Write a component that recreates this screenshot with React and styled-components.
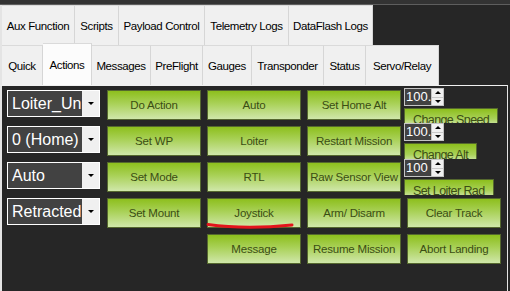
import styled, { createGlobalStyle } from 'styled-components';

const Global = createGlobalStyle`
  html, body { margin: 0; padding: 0; background: #262626; }
  body { font-family: 'Liberation Sans', Arial, sans-serif; overflow: hidden; }
`;

const Window = styled.div`
  position: relative;
  width: 510px;
  height: 291px;
  background: #262626;
  display: flex;
  flex-direction: column;
  overflow: hidden;
`;

const TopEdge = styled.div`
  height: 5px;
  box-sizing: border-box;
  background: #333333;
  border-bottom: 1px solid #5e5e5e;
`;

const TabRow = styled.div`
  display: flex;
  align-items: flex-end;
  height: 40px;
  border-left: 2px solid #e4e4e4;
`;

const Tab = styled.div`
  width: ${p => p.$w}px;
  height: ${p => (p.$active ? 42 : 40)}px;
  box-sizing: border-box;
  background: ${p => (p.$active ? '#fcfcfc' : '#f0f0f0')};
  border-top: 1px solid #dadada;
  border-right: 1px solid #d6d6d6;
  display: flex;
  align-items: center;
  justify-content: center;
  font-size: 11.5px;
  letter-spacing: -0.4px;
  color: #000;
  white-space: nowrap;
`;

const Panel = styled.div`
  flex: 1;
  width: 508px;
  box-sizing: border-box;
  border-top: 1px solid #f0f0f0;
  border-left: 2px solid #e4e4e4;
  border-right: 1px solid #e4e4e4;
  padding: 4px 0 0 5px;
`;

const Grid = styled.div`
  display: grid;
  grid-template-columns: repeat(5, 94px);
  grid-template-rows: repeat(5, 30px);
  gap: 6px;
`;

const Combo = styled.div`
  grid-column: 1;
  width: 93px;
  height: 27px;
  box-sizing: border-box;
  border: 1px solid #ffffff;
  background: #424242;
  display: flex;
`;

const ComboText = styled.div`
  flex: 1;
  overflow: hidden;
  white-space: nowrap;
  color: #ffffff;
  font-size: 16px;
  line-height: 25px;
  padding-left: 4px;
`;

const DropButton = styled.div`
  width: 17px;
  background: #f0f0f0;
  display: flex;
  align-items: center;
  justify-content: center;
  &::after {
    content: '';
    border-left: 3px solid transparent;
    border-right: 3px solid transparent;
    border-top: 3px solid #000;
  }
`;

const GreenButton = styled.div`
  grid-column: ${p => p.$col};
  grid-row: ${p => p.$row};
  box-sizing: border-box;
  height: 30px;
  border: 1px solid #55682e;
  background: linear-gradient(to bottom, #8dbf1d 0%, #a9d158 45%, #d0e7aa 100%);
  color: #3b4d14;
  font-size: 11.5px;
  letter-spacing: -0.2px;
  display: flex;
  align-items: center;
  justify-content: center;
  white-space: nowrap;
`;

const Stack = styled.div`
  grid-column: 5;
  grid-row: 1 / span 3;
  margin: -2px 0 0 -3px;
  display: flex;
  flex-direction: column;
  align-items: flex-start;
`;

const Numeric = styled.div`
  width: 40px;
  height: 18px;
  box-sizing: border-box;
  border: 1px solid #c4c4c4;
  background: #424242;
  display: flex;
`;

const NumText = styled.div`
  flex: 1;
  color: #ffffff;
  font-size: 13px;
  line-height: 16px;
  padding-left: 1px;
  overflow: hidden;
`;

const Spinner = styled.div`
  width: 11px;
  background: #f0f0f0;
  border-left: 1px solid #c4c4c4;
  display: flex;
  flex-direction: column;
`;

const SpinHalf = styled.div`
  flex: 1;
  display: flex;
  align-items: center;
  justify-content: center;
  border-top: ${p => (p.$down ? '1px solid #c8c8c8' : 'none')};
  &::after {
    content: '';
    border-left: 3px solid transparent;
    border-right: 3px solid transparent;
    ${p => (p.$down ? 'border-top: 3px solid #000;' : 'border-bottom: 3px solid #000;')}
  }
`;

const ClipButton = styled.div`
  margin-top: 2px;
  height: ${p => p.$h}px;
  box-sizing: border-box;
  overflow: hidden;
  padding: 1px 8px 0;
  border: 1px solid #55682e;
  border-bottom: none;
  background: linear-gradient(to bottom, #8dbf1d 0%, #a9d158 70%, #c3df90 100%);
  color: #3b4d14;
  font-size: 12.5px;
  letter-spacing: -0.6px;
  line-height: 20px;
  white-space: nowrap;
`;

const Annotation = styled.svg`
  position: absolute;
  left: 0;
  top: 0;
  pointer-events: none;
`;

const row1 = [
  ['Aux Function', 73],
  ['Scripts', 44],
  ['Payload Control', 86],
  ['Telemetry Logs', 84],
  ['DataFlash Logs', 84],
];

const row2 = [
  ['Quick', 41],
  ['Actions', 49, true],
  ['Messages', 59],
  ['PreFlight', 52],
  ['Gauges', 49],
  ['Transponder', 72],
  ['Status', 42],
  ['Servo/Relay', 73],
];

const combos = ['Loiter_Unlim', '0 (Home)', 'Auto', 'Retracted'];

const buttons = [
  ['Do Action', 2, 1], ['Auto', 3, 1], ['Set Home Alt', 4, 1],
  ['Set WP', 2, 2], ['Loiter', 3, 2], ['Restart Mission', 4, 2],
  ['Set Mode', 2, 3], ['RTL', 3, 3], ['Raw Sensor View', 4, 3],
  ['Set Mount', 2, 4], ['Joystick', 3, 4], ['Arm/ Disarm', 4, 4], ['Clear Track', 5, 4],
  ['Message', 3, 5], ['Resume Mission', 4, 5], ['Abort Landing', 5, 5],
];

const spinners = [
  ['100.', 'Change Speed', 15],
  ['100.', 'Change Alt', 16],
  ['100', 'Set Loiter Rad', 16],
];

export default function App() {
  return (
    <Window>
      <Global />
      <TopEdge />
      <TabRow>
        {row1.map(([t, w]) => <Tab key={t} $w={w}>{t}</Tab>)}
      </TabRow>
      <TabRow>
        {row2.map(([t, w, a]) => <Tab key={t} $w={w} $active={a}>{t}</Tab>)}
      </TabRow>
      <Panel>
        <Grid>
          {combos.map((c, i) => (
            <Combo key={c} style={{ gridRow: i + 1 }}>
              <ComboText>{c}</ComboText>
              <DropButton />
            </Combo>
          ))}
          {buttons.map(([t, col, row]) => (
            <GreenButton key={t} $col={col} $row={row}>{t}</GreenButton>
          ))}
          <Stack>
            {spinners.map(([v, label, h]) => (
              <div key={label}>
                <Numeric>
                  <NumText>{v}</NumText>
                  <Spinner>
                    <SpinHalf />
                    <SpinHalf $down />
                  </Spinner>
                </Numeric>
                <ClipButton $h={h}>{label}</ClipButton>
              </div>
            ))}
          </Stack>
        </Grid>
      </Panel>
      <Annotation width="510" height="291">
        <path d="M208 224.5 C 232 227.8, 262 228, 292 225" stroke="#e3141c" strokeWidth="3" fill="none" strokeLinecap="round" />
      </Annotation>
    </Window>
  );
}
